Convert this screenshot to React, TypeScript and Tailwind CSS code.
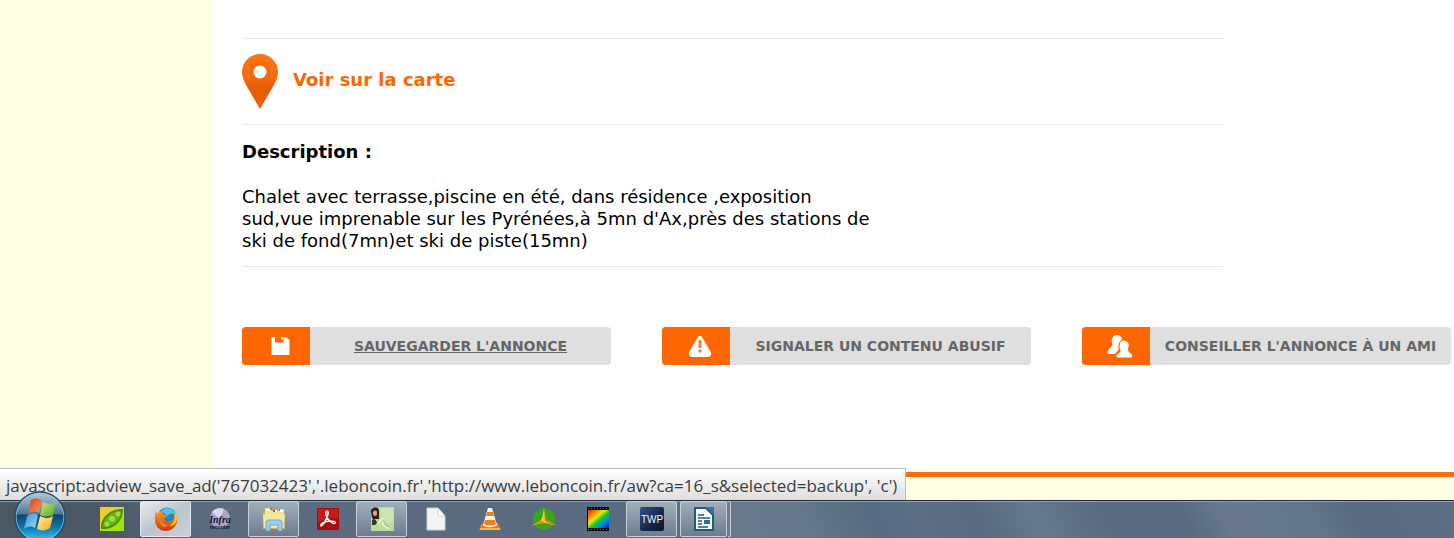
import React from "react"

const actions = [
  { label: "SAUVEGARDER L'ANNONCE", icon: <SaveIcon />, underlined: true },
  { label: "SIGNALER UN CONTENU ABUSIF", icon: <WarningIcon />, underlined: false },
  { label: "CONSEILLER L'ANNONCE À UN AMI", icon: <FriendsIcon />, underlined: false },
]

const tasks = [
  { name: "Peas", icon: <PeasIcon />, state: "idle" },
  { name: "Firefox", icon: <FirefoxIcon />, state: "active" },
  { name: "InfraRecorder", icon: <InfraIcon />, state: "idle" },
  { name: "Explorateur", icon: <ExplorerIcon />, state: "open" },
  { name: "Adobe Reader", icon: <ReaderIcon />, state: "idle" },
  { name: "Notes", icon: <NotesIcon />, state: "open" },
  { name: "Document", icon: <PageIcon />, state: "idle" },
  { name: "VLC", icon: <VlcIcon />, state: "idle" },
  { name: "Tri", icon: <TriIcon />, state: "idle" },
  { name: "Film", icon: <FilmIcon />, state: "idle" },
  { name: "TWP", icon: <TwpIcon />, state: "open" },
]

function PinIcon() {
  return (
    <svg className="w-9 h-[55px]" viewBox="0 0 36 55" aria-hidden="true">
      <defs>
        <linearGradient id="pin" x1="0" y1="0" x2="0" y2="1">
          <stop offset="0" stopColor="#ff7412" />
          <stop offset="0.45" stopColor="#f66b0e" />
          <stop offset="0.6" stopColor="#e55d05" />
          <stop offset="1" stopColor="#ee6207" />
        </linearGradient>
      </defs>
      <path d="M18 0C8 0 0 8 0 18c0 5 2 9 4 13l14 24 14-24c2-4 4-8 4-13C36 8 28 0 18 0z" fill="url(#pin)" />
      <circle cx="18" cy="18" r="9" fill="none" stroke="#e5650f" strokeWidth="4" opacity="0.5" />
      <circle cx="18" cy="18" r="6.500" fill="#fff" />
    </svg>
  )
}

function SaveIcon() {
  return (
    <svg className="w-6 h-6" viewBox="0 0 24 24" aria-hidden="true">
      <path d="M3.500 3H7v5.500h8.500V3H18l3.500 3v15h-18z" fill="#fff" />
      <path d="M13 3h2v2.500h-2z" fill="#fff" />
    </svg>
  )
}

function WarningIcon() {
  return (
    <svg className="w-6 h-6" viewBox="0 0 24 24" aria-hidden="true">
      <path d="M12 4.500L20.500 19a1 1 0 0 1-.500 1.500H4A1 1 0 0 1 3.500 19z" fill="#fff" stroke="#fff" strokeWidth="5" strokeLinejoin="round" />
      <rect x="10.500" y="6" width="3" height="8" rx="1" fill="#ff7a26" />
      <rect x="10.500" y="15.500" width="3" height="3" rx="1" fill="#ff7a26" />
    </svg>
  )
}

function FriendsIcon() {
  return (
    <svg className="w-[26px] h-6" viewBox="0 0 26 24" aria-hidden="true">
      <path d="M10 1c3 0 5 2 5 5 0 2-1 4-2 6l-1 3-4 5H2c-1 0-2-1-1-3 0-2 3-3 4-5 1-1 0-2 0-3-1-4 1-8 5-8z" fill="#fff" />
      <path d="M17 6c4 0 6 3 5 7 0 2-1 3 0 4 1 2 4 2 4 5 0 1-1 2-2 2H11c-2 0-3-2-2-3 1-2 3-2 4-4 0-1-1-2-1-4 0-4 1-7 5-7z" fill="#fff" stroke="#ff6600" strokeWidth="1.200" />
    </svg>
  )
}

function StartOrb() {
  return (
    <svg className="w-[52px] h-[52px]" viewBox="0 0 52 52" aria-hidden="true">
      <defs>
        <linearGradient id="orb" x1="0" y1="0" x2="0" y2="1">
          <stop offset="0" stopColor="#b6cad8" />
          <stop offset="0.25" stopColor="#7c9db3" />
          <stop offset="0.44" stopColor="#4b7794" />
          <stop offset="0.46" stopColor="#0c446c" />
          <stop offset="0.7" stopColor="#0b75b0" />
          <stop offset="1" stopColor="#35d0f5" />
        </linearGradient>
        <linearGradient id="flagRed" x1="0" y1="0" x2="1" y2="1">
          <stop offset="0" stopColor="#d93a12" />
          <stop offset="1" stopColor="#f9a26c" />
        </linearGradient>
        <linearGradient id="flagGreen" x1="0" y1="0" x2="1" y2="1">
          <stop offset="0" stopColor="#c9e28a" />
          <stop offset="1" stopColor="#57a824" />
        </linearGradient>
        <linearGradient id="flagBlue" x1="0" y1="0" x2="1" y2="1">
          <stop offset="0" stopColor="#3b8bd0" />
          <stop offset="1" stopColor="#a5dcf8" />
        </linearGradient>
        <linearGradient id="flagYellow" x1="0" y1="0" x2="1" y2="1">
          <stop offset="0" stopColor="#fff0a0" />
          <stop offset="1" stopColor="#f5ac10" />
        </linearGradient>
      </defs>
      <circle cx="26" cy="26" r="25" fill="url(#orb)" stroke="#254b69" strokeWidth="1.500" />
      <circle cx="26" cy="26" r="23.800" fill="none" stroke="#a4c9de" strokeWidth="1" opacity="0.7" />
      <path d="M17 9c4-2 7-2 11 0l-3 13c-4-2-7-2-11 1z" fill="url(#flagRed)" />
      <path d="M29 11c4 2 8 3 13 0l-3 13c-4 2-9 2-13 0z" fill="url(#flagGreen)" />
      <path d="M13 25c4-3 7-3 11-1l-3 13c-4-2-7-2-11 1z" fill="url(#flagBlue)" />
      <path d="M26 25c4 2 8 3 13 0l-3 12c-4 3-9 3-13 1z" fill="url(#flagYellow)" />
    </svg>
  )
}

function PeasIcon() {
  return (
    <svg className="w-6 h-6" viewBox="0 0 24 24" aria-hidden="true">
      <path d="M0 0h24v24H0z" fill="#a4e20c" />
      <path d="M0 0h24L0 24z" fill="#f0cd27" />
      <path d="M1 22C0 12 8 2 23 2c0 12-8 21-22 20z" fill="#42910b" />
      <path d="M3 20C3 12 10 4 21 4c0 9-7 16-18 16z" fill="#60b512" />
      <circle cx="7" cy="17" r="2.500" fill="#a6dc30" />
      <circle cx="12" cy="12" r="3" fill="#a6dc30" />
      <circle cx="18" cy="7" r="2.500" fill="#a6dc30" />
    </svg>
  )
}

function FirefoxIcon() {
  return (
    <svg className="w-6 h-6" viewBox="0 0 24 24" aria-hidden="true">
      <defs>
        <linearGradient id="fox" x1="0" y1="0" x2="0" y2="1">
          <stop offset="0" stopColor="#f69a20" />
          <stop offset="0.5" stopColor="#e86c16" />
          <stop offset="1" stopColor="#c93713" />
        </linearGradient>
      </defs>
      <circle cx="13" cy="10" r="9.500" fill="#2586c3" />
      <path d="M8 3c5-4 13-1 14 5-3-3-8-1-8 1-3-2-5-3-6-6z" fill="#55c3e5" />
      <path d="M2 4c0 2 1 2 2 2 2-2 4-2 5-2-1 2 0 3 1 4 2 0 3 0 3 1s-2 2-3 3c1 3 4 4 7 2 3-1 4-4 3-8 3 2 4 6 3 9-1 5-6 9-11 9C5 24 1 19 1 13c0-4 0-6 1-9z" fill="url(#fox)" />
      <path d="M20 5c2 2 3 4 3 7-1 5-4 7-8 7 4-2 7-6 5-14z" fill="#ffc43a" />
      <path d="M6 11c0 5 4 7 8 7l-3 2c-4-1-6-5-5-9z" fill="#f58b22" />
    </svg>
  )
}

function InfraIcon() {
  return (
    <svg className="w-6 h-6" viewBox="0 0 24 24" aria-hidden="true">
      <circle cx="12" cy="11" r="10" fill="#aaa6ce" />
      <path d="M12 12L4 5c4-5 9-4 12-3z" fill="#d9d8eb" />
      <text x="12" y="16" textAnchor="middle" fontSize="10" fontWeight="bold" fontStyle="italic" fill="#111127" className="font-['Liberation_Serif',serif]">Infra</text>
      <text x="12" y="22" textAnchor="middle" fontSize="5" fontWeight="bold" fill="#111127" className="font-['Liberation_Sans',sans-serif]">recorder</text>
    </svg>
  )
}

function ExplorerIcon() {
  return (
    <svg className="w-6 h-6" viewBox="0 0 24 24" aria-hidden="true">
      <path d="M1 5l2-3h7l1 2h11l1 18H1z" fill="#d8b552" />
      <path d="M3 1h6l1 3h6l1-2h5v8H3z" fill="#f5e08c" />
      <path d="M4 3h4M12 4h3M18 4h3" stroke="#fff" strokeWidth="2" />
      <path d="M8 2h2M17 3h1" stroke="#4ba843" strokeWidth="2" />
      <path d="M11 4h2" stroke="#d34527" strokeWidth="2" />
      <path d="M1 8c7-2 15-2 22 0l-1 13H2z" fill="#f6e7a0" />
      <path d="M4 24v-8c0-2 1-3 3-3h10c2 0 3 1 3 3v8h-4v-6H8v6z" fill="#9dcdea" stroke="#6ba9cf" />
    </svg>
  )
}

function ReaderIcon() {
  return (
    <svg className="w-[22px] h-[22px]" viewBox="0 0 22 22" aria-hidden="true">
      <path d="M0 0h22v22H0z" fill="#a90a0d" />
      <path d="M1 1h20v10C14 9 8 11 1 15z" fill="#c51b1b" />
      <path d="M4 18c-2-2 5-5 9-5 3 0 7 1 5 2-2 2-8-4-9-8-1-5 3-5 2-1-1 4-4 11-7 12z" fill="none" stroke="#fff" strokeWidth="1.500" />
    </svg>
  )
}

function NotesIcon() {
  return (
    <svg className="w-6 h-6" viewBox="0 0 24 24" aria-hidden="true">
      <path d="M1 0h23v24H1z" fill="#bfda99" />
      <path d="M10 1h13v13c-4 5-7-2-9 5z" fill="#cde4ad" />
      <path d="M1 5c-1-5 8-7 8-1v8H3C1 10 2 8 1 5z" fill="#302019" />
      <path d="M3 5c1-2 4-2 4 0s0 4-2 4-2-2-2-4z" fill="#dba686" />
      <path d="M2 13c2-2 4-1 5 3l-2 2H2z" fill="#353c2a" />
      <path d="M8 17l4-5 1 6 6 4" fill="none" stroke="#eef8df" strokeWidth="1.500" />
      <path d="M11 15c5-5 3 7 8 4" fill="none" stroke="#9cb583" />
    </svg>
  )
}

function PageIcon() {
  return (
    <svg className="w-5 h-6" viewBox="0 0 20 24" aria-hidden="true">
      <path d="M1 1h11l7 8v14H1z" fill="#f4f4f4" stroke="#cfcfcf" />
      <path d="M12 1l7 8h-5c-1 0-2-1-2-2z" fill="#fff" stroke="#c9c9c9" strokeWidth="0.800" />
    </svg>
  )
}

function VlcIcon() {
  return (
    <svg className="w-[22px] h-6" viewBox="0 0 22 24" aria-hidden="true">
      <path d="M3 16h16l3 7H0z" fill="#ef7a0c" />
      <path d="M9 1h4l5 17c-3 3-11 3-14 0z" fill="#f3f3f0" />
      <path d="M8 5h6l1 4H7zM6 13h10l1 4c-3 2-9 2-12 0z" fill="#ed8119" />
      <path d="M1 22h20" stroke="#f9b252" strokeWidth="2" />
    </svg>
  )
}

function TriIcon() {
  return (
    <svg className="w-6 h-6" viewBox="0 0 24 24" aria-hidden="true">
      <circle cx="12" cy="12" r="11" fill="#37a51d" />
      <path d="M12 1c1 5 1 9 3 12l9 5c-5 0-8-2-12-2s-7 1-12 3l9-6c2-3 2-7 3-12z" fill="#f8cf29" />
      <path d="M12 1c1 5 1 9 3 12l9 5c-5 0-8-3-11-4z" fill="#d86a16" />
      <path d="M0 19l9-6 4 3c-5 0-9 1-13 3z" fill="#e5901b" />
    </svg>
  )
}

function FilmIcon() {
  return (
    <svg className="w-6 h-6" viewBox="0 0 24 24" aria-hidden="true">
      <defs>
        <linearGradient id="film" x1="0" y1="0" x2="1" y2="1">
          <stop offset="0" stopColor="#f21b12" />
          <stop offset="0.25" stopColor="#fb9a08" />
          <stop offset="0.4" stopColor="#ece80c" />
          <stop offset="0.55" stopColor="#15c933" />
          <stop offset="0.75" stopColor="#0787e0" />
          <stop offset="1" stopColor="#0717c7" />
        </linearGradient>
      </defs>
      <path d="M1 0h22v24H1z" fill="#090909" />
      <path d="M2 3h21v18H2z" fill="url(#film)" />
      <path d="M2 1.500h21M2 22.500h21" stroke="#686868" strokeDasharray="1 2" />
    </svg>
  )
}

function TwpIcon() {
  return (
    <svg className="w-6 h-6" viewBox="0 0 24 24" aria-hidden="true">
      <defs>
        <linearGradient id="twp" x1="0" y1="0" x2="1" y2="1">
          <stop offset="0" stopColor="#2c528d" />
          <stop offset="0.6" stopColor="#142647" />
          <stop offset="1" stopColor="#0b1428" />
        </linearGradient>
      </defs>
      <rect width="24" height="24" rx="2" fill="url(#twp)" />
      <text x="12" y="16" textAnchor="middle" fontSize="10" fill="#f1f5fa" className="font-['Liberation_Sans',sans-serif]">TWP</text>
    </svg>
  )
}

function WriterIcon() {
  return (
    <svg className="w-5 h-6" viewBox="0 0 20 24" aria-hidden="true">
      <path d="M1 1h11l7 7v15H1z" fill="#fff" stroke="#1d5a84" strokeWidth="2" />
      <path d="M12 0h8v8z" fill="#2c79a9" />
      <path d="M4 8h6M4 11h12M4 14h4M4 17h4M4 20h10" stroke="#1d5a84" strokeWidth="1.500" />
      <path d="M10 13h6v4h-6z" fill="#286f9d" />
    </svg>
  )
}

function TaskButton({ name, icon, state }: { name: string; icon: React.ReactNode; state: string }) {
  const looks: Record<string, string> = {
    idle: "border-transparent",
    open: "border-[#c7d0d8] bg-linear-to-b from-[#a2afba] to-[#6b7d8e]",
    active: "border-[#e5e9ec] bg-linear-to-br from-[#e9ecef] via-[#bcc5ce] to-[#cbd2da]",
  }
  return (
    <button type="button" aria-label={name} className={`flex w-[51px] h-9 items-center justify-center rounded-xs border ${looks[state]}`}>
      {icon}
    </button>
  )
}

export default function App() {
  return (
    <div className="flex min-h-screen flex-col bg-white font-['DejaVu_Sans',sans-serif] text-lg leading-[22px] text-black">
      <div className="relative flex flex-1 flex-col">
        <div className="flex flex-1">
          <aside className="w-[213px] shrink-0 bg-[#ffffe8]" />

          <main className="min-w-0 flex-1 pl-[29px] pt-[38px]">
            {/* Carte */}
            <div className="max-w-[981px] border-y border-[#e6e6e6] py-[15px]">
              <a href="#carte" className="flex items-center gap-[15px] font-bold text-[#ff6600]">
                <PinIcon />
                <span className="pb-1">Voir sur la carte</span>
              </a>
            </div>

            {/* Description */}
            <section className="max-w-[981px] border-b border-[#e6e6e6] pt-4 pb-[14px]">
              <h2 className="mb-[23px] font-bold">Description :</h2>
              <p className="max-w-[640px]">
                Chalet avec terrasse,piscine en été, dans résidence ,exposition
                sud,vue imprenable sur les Pyrénées,à 5mn d'Ax,près des stations de
                ski de fond(7mn)et ski de piste(15mn)
              </p>
            </section>

            {/* Actions */}
            <div className="mt-[60px] mr-[3px] mb-6 grid grid-cols-3 gap-[51px]">
              {actions.map((action) => (
                <a key={action.label} href="#annonce" className="flex h-[38px] overflow-hidden rounded-sm bg-[#dfdfdf] text-sm font-bold text-[#666]">
                  <span className="flex w-[68px] shrink-0 items-center justify-center bg-[#ff6600] pl-2">{action.icon}</span>
                  <span className={`flex-1 self-center whitespace-nowrap text-center ${action.underlined ? "underline" : ""}`}>
                    {action.label}
                  </span>
                </a>
              ))}
            </div>
          </main>
        </div>

        <footer className="h-7 border-t-5 border-[#ff6a0a] bg-[#ffffe8]" />

        {/* Link address shown by the browser */}
        <div className="absolute bottom-0 left-0 flex h-8 items-center whitespace-nowrap border-t border-r border-[#bdbdbd] bg-linear-to-b from-white to-[#dedede] pt-[2px] pr-2 pl-[6px] font-['Open_Sans',sans-serif] text-[17px] text-[#3c3c3c]">
          javascript:adview_save_ad('767032423','.leboncoin.fr','http://www.leboncoin.fr/aw?ca=16_s&amp;selected=backup', 'c')
        </div>
      </div>

      {/* Taskbar */}
      <nav className="relative flex h-[38px] border-t border-[#1d2a38] bg-[linear-gradient(65deg,#4a5764_0%,#4b5967_8%,#5a6b7e_14%,#5b6c82_46%,#68798a_50%,#66778a_55%,#596b80_60%,#5d6f86_63%,#596b80_67%,#67788a_71%,#596b80_76%,#596b80_81%,#68788a_84%,#647588_90%,#586a7f_93%,#5e6f85_100%)] pl-[86px] shadow-[inset_0_1px_0_#91a0af]">
        <button type="button" aria-label="Démarrer" className="absolute -top-[10px] left-[14px] h-12 overflow-hidden">
          <StartOrb />
        </button>
        <div className="flex gap-[3px]">
          {tasks.map((task) => (
            <TaskButton key={task.name} {...task} />
          ))}
          <button type="button" aria-label="Writer" className="flex h-9 items-stretch gap-px">
            <span className="flex w-[47px] items-center justify-center rounded-xs border border-[#c7d0d8] bg-linear-to-b from-[#a2afba] to-[#6b7d8e]">
              <WriterIcon />
            </span>
            <span className="w-[3px] rounded-r-xs border-y border-r border-[#c7d0d8] bg-[#6b7d8e]" />
          </button>
        </div>
      </nav>
    </div>
  )
}
